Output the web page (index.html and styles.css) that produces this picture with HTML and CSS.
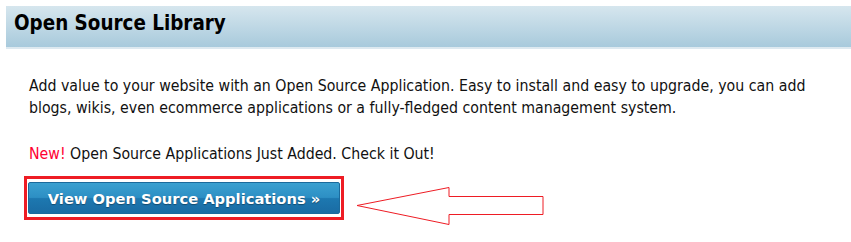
FILE: index.html
```html
<!DOCTYPE html>
<html>
  <head>
    <title>Open Source Library</title>
    <link rel="stylesheet" href="styles.css">
  </head>

  <body>
    <div class="box-head">
      <h2>Open Source Library</h2>
    </div>

    <div class="box-body">
      <p class="intro">
        Add value to your website with an Open Source Application. Easy to install and easy to upgrade, you can add
        blogs, wikis, even ecommerce applications or a fully-fledged content management system.
      </p>

      <p class="news"><span class="new">New!</span> Open Source Applications Just Added. Check it Out!</p>

      <div class="cta-row">
        <div class="highlight">
          <a class="btn-view" href="#">View Open Source Applications &raquo;</a>
        </div>
        <!-- annotation arrow pointing at the button -->
        <svg class="pointer" width="204" height="44" viewBox="0 0 204 44">
          <polygon points="13,24.5 105,6.5 105,15.5 199,15.5 199,33.5 105,33.5 105,43.5"
                   fill="none" stroke="#ee1c24" stroke-width="1" />
        </svg>
      </div>
    </div>
  </body>
</html>
```

FILE: styles.css
```css
body {
  margin: 6px 0 0 6px;
  font-family: "DejaVu Sans Condensed", "DejaVu Sans", sans-serif;
  color: #111;
  background: #fff;
}

.box-head {
  height: 41px;
  background: linear-gradient(to bottom, #d6e6ee, #a8cadc);
  border-bottom: 2px solid #dde9f0;
  padding-left: 8px;
}

.box-head h2 {
  margin: 0;
  font-size: 20.4px;
  line-height: 34px;
  font-weight: bold;
  color: #000;
}

.box-body {
  padding: 26px 0 0 23px;
}

.intro {
  margin: 0;
  font-size: 15.75px;
  line-height: 22px;
  width: 812px;
}

.news {
  margin: 24px 0 0;
  font-size: 15.75px;
  line-height: 22px;
}

.new {
  color: #ff0033;
}

.cta-row {
  display: flex;
  align-items: flex-start;
  margin-top: 11px;
  margin-left: -5px;
}

.highlight {
  border: 3px solid #ee1c24;
  padding: 3px 1px;
}

.btn-view {
  display: block;
  width: 312px;
  height: 32px;
  line-height: 32px;
  text-align: center;
  border: 1px solid #1b6a9c;
  border-radius: 2px;
  background: linear-gradient(to bottom, #3aa0d0 0%, #2d8fc4 48%, #1d78b0 52%, #1a6ca4 100%);
  color: #fff;
  font-family: "DejaVu Sans", sans-serif;
  font-size: 14.7px;
  font-weight: bold;
  text-decoration: none;
  text-shadow: 0 1px 1px rgba(0, 0, 0, 0.35);
  box-sizing: border-box;
}

.pointer {
  display: block;
  margin-top: 5px;
}
```
